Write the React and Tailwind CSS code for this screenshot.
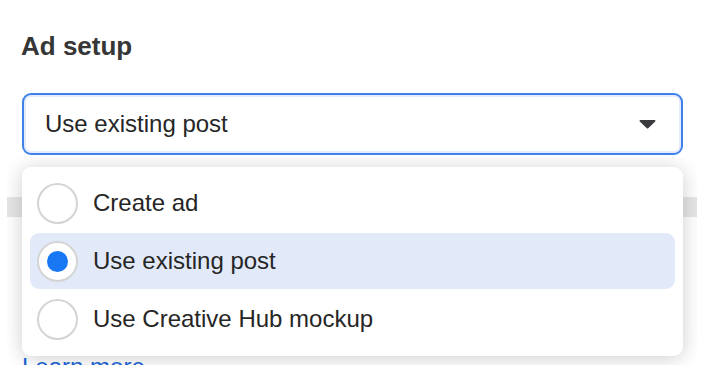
import React, { useState } from 'react';

const options = ['Create ad', 'Use existing post', 'Use Creative Hub mockup'];

const Radio = ({ checked }) => (
    <span className="w-[41px] h-[41px] shrink-0 rounded-full border-2 border-[#d4d4d4] bg-white flex items-center justify-center">
        {checked && <span className="w-[21px] h-[21px] rounded-full bg-[#1877f2]"></span>}
    </span>
);

const App = () => {
    const [selected, setSelected] = useState('Use existing post');

    return (
        <div className="w-[722px] h-[377px] bg-white overflow-hidden text-[#1c1e21]" style={{ fontFamily: '"Liberation Sans", Arial, sans-serif' }}>
            <h2 className="pl-[21px] pt-[30px] text-[26px] leading-[32px] font-bold text-[#363636]">Ad setup</h2>

            <div className="ml-[22px] w-[661px] mt-[31px] h-[62px] rounded-[9px] border-2 border-[#3f81e8] shadow-[inset_0_0_0_2px_#e4ecfb] flex items-center justify-between pl-[21px] pr-[25px]">
                <span className="text-[24px] text-[#262626]">{selected}</span>
                <svg width="17" height="10" viewBox="0 0 17 10" className="text-[#3a3b3f]">
                    <path d="M1.5 1h14c.9 0 1.3 1 .7 1.6L9.2 9.2a1 1 0 0 1-1.4 0L.8 2.6C.2 2 .6 1 1.5 1z" fill="currentColor" />
                </svg>
            </div>

            <div className="relative ml-[7px] mt-[2px] w-[690px] h-[208px] overflow-hidden">
                <div className="mt-[40px] h-[20px] bg-[#e6e6e6]"></div>
                <a className="absolute left-[15px] top-[196px] text-[24px] leading-[28px] text-[#1b66d6]">Learn more</a>

                <div className="absolute left-[15px] top-[10px] w-[661px] h-[189px] bg-white rounded-[9px] shadow-[0_2px_20px_rgba(0,0,0,0.2)] px-[8px] py-[8px] flex flex-col gap-[2px]">
                    {options.map(opt => (
                        <button
                            key={opt}
                            onClick={() => setSelected(opt)}
                            className={`h-[56px] rounded-[9px] flex items-center gap-[15px] pl-[7px] text-left ${selected === opt ? 'bg-[#e2eafa]' : ''}`}
                        >
                            <Radio checked={selected === opt} />
                            <span className="text-[24px] text-[#262626]">{opt}</span>
                        </button>
                    ))}
                </div>
            </div>
        </div>
    );
};

export default App;
